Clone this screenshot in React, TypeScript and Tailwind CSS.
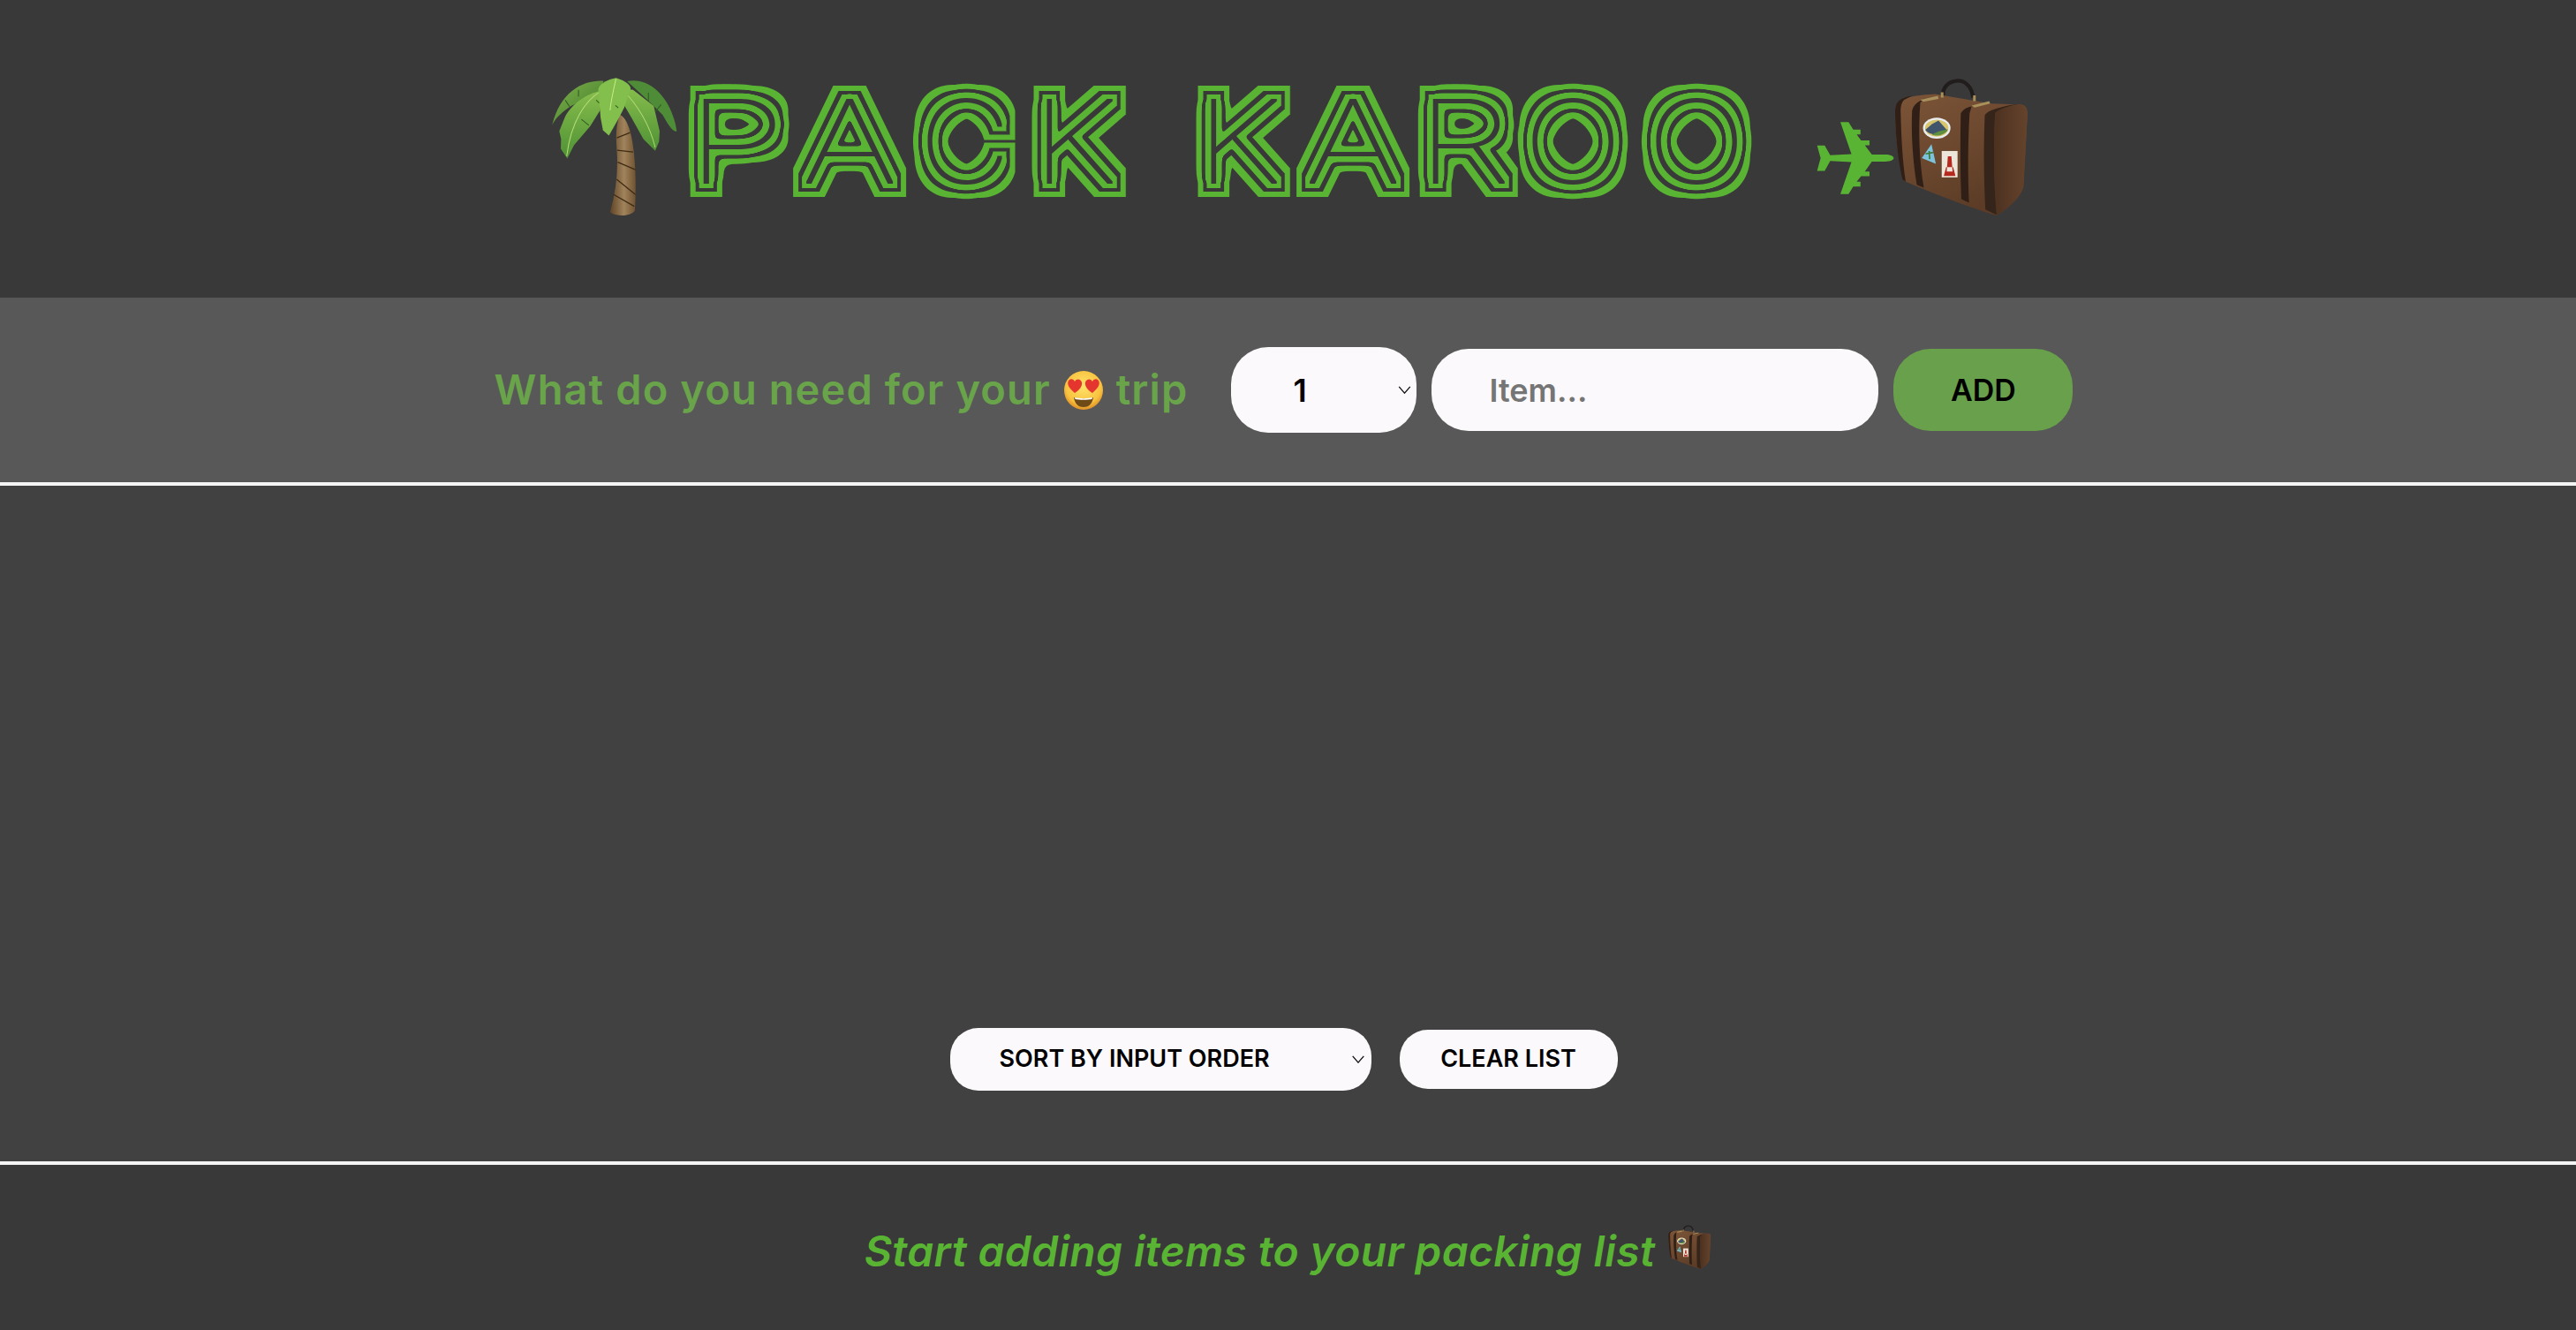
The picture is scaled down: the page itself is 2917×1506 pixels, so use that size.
const titleLetters = [
  { char: 'P', box: 'w-[124px]', stretch: 'scale-x-[1.45]' },
  { char: 'A', box: 'w-[134px]', stretch: 'scale-x-[1.3]' },
  { char: 'C', box: 'w-[127px]', stretch: 'scale-x-[1.1]' },
  { char: 'K', box: 'w-[121px]', stretch: 'scale-x-[1.25]' },
  { char: ' ', box: 'w-[68px]', stretch: '' },
  { char: 'K', box: 'w-[114px]', stretch: 'scale-x-[1.25]' },
  { char: 'A', box: 'w-[145px]', stretch: 'scale-x-[1.3]' },
  { char: 'R', box: 'w-[107px]', stretch: 'scale-x-[1.35]' },
  { char: 'O', box: 'w-[140px]', stretch: 'scale-x-[1.15]' },
  { char: 'O', box: 'w-[140px]', stretch: 'scale-x-[1.15]' },
];

function Palm({ className }: { className?: string }) {
  return (
    <svg viewBox="75 55 425 465" className={className}>
      <defs>
        <linearGradient id="trunk" x1="0" x2="1" y1="0" y2="0">
          <stop offset="0" stopColor="#5f4426" />
          <stop offset="0.55" stopColor="#a1845c" />
          <stop offset="1" stopColor="#6f5230" />
        </linearGradient>
        <linearGradient id="leafBack" x1="0" x2="1" y1="0" y2="1">
          <stop offset="0" stopColor="#7fb24a" />
          <stop offset="1" stopColor="#3f7a2c" />
        </linearGradient>
        <linearGradient id="leafFront" x1="0" x2="0" y1="0" y2="1">
          <stop offset="0" stopColor="#86bd4c" />
          <stop offset="1" stopColor="#4f9135" />
        </linearGradient>
      </defs>
      <path d="M305 180 C330 190 345 240 352 300 C360 370 360 440 356 505 C340 525 290 525 272 510 C292 440 300 370 295 300 C292 260 290 220 305 180Z" fill="url(#trunk)" />
      <path d="M295 258 L340 240 M296 300 L350 306 M298 340 L358 366 M294 398 L358 450 M284 450 L354 490" stroke="#3f2a14" strokeWidth="4" fill="none" />
      <path d="M250 65 C180 62 105 100 76 214 C88 190 110 170 140 150 L240 100Z" fill="url(#leafBack)" />
      <path d="M330 66 C400 50 480 115 498 235 C485 240 470 215 450 180 L400 130Z" fill="#4f8c38" />
      <path d="M245 98 C190 105 135 150 118 190 L100 235 L106 262 L105 295 L127 328 L150 282 L205 218 L238 165Z" fill="url(#leafFront)" />
      <path d="M240 100 C190 130 140 200 125 320" stroke="#b5dc78" strokeWidth="3" fill="none" />
      <path d="M310 90 L350 95 L420 150 L440 235 L438 270 L425 302 L385 262 L345 190 L310 130Z" fill="url(#leafFront)" />
      <path d="M310 90 C350 130 400 190 425 290" stroke="#b5dc78" strokeWidth="3" fill="none" />
      <path d="M292 55 C268 60 240 70 232 92 L240 190 L248 232 L268 250 L292 208 L302 190 L320 155 L342 90 C338 72 310 60 292 55Z" fill="#82bf4c" />
      <path d="M292 58 C285 90 275 130 272 165" stroke="#c8ea8a" strokeWidth="3" fill="none" />
      <path d="M165 95 V118 M120 130 L135 152 M402 105 V132 M445 145 L425 170 M235 140 L225 130 M290 148 L300 156 M175 195 L200 215" stroke="#2f5a22" strokeWidth="3" fill="none" />
    </svg>
  );
}

function Suitcase({ className }: { className?: string }) {
  return (
    <svg viewBox="312 50 453 470" className={className}>
      <defs>
        <linearGradient id="hide" x1="0" x2="0.5" y1="0" y2="1">
          <stop offset="0" stopColor="#7d5538" />
          <stop offset="1" stopColor="#5c3c26" />
        </linearGradient>
        <linearGradient id="hideSide" x1="0" x2="1" y1="0" y2="0">
          <stop offset="0" stopColor="#4c3120" />
          <stop offset="1" stopColor="#65432c" />
        </linearGradient>
      </defs>
      <path d="M478 112 C470 55 570 30 580 118" stroke="#211d1c" strokeWidth="13" fill="none" />
      <path d="M314 160 C315 125 350 112 450 106 L640 138 L745 142 C762 145 766 160 765 180 L752 420 C745 460 690 500 660 520 C560 490 430 440 345 402 C325 340 314 240 314 160Z" fill="url(#hide)" />
      <path d="M655 165 C690 150 720 142 745 142 C762 145 766 160 765 180 L752 420 C745 460 690 500 660 520 C650 400 650 280 655 165Z" fill="url(#hideSide)" />
      <path d="M314 160 C315 130 335 118 372 112 L345 125 C335 135 332 150 333 170 C335 260 340 340 350 404 L340 398 C325 340 314 240 314 160Z" fill="#2f1f16" />
      <path d="M372 162 C378 140 395 128 420 120 L400 134 C392 230 397 340 412 425 L388 415 C375 340 368 240 372 162Z" fill="#2f1f16" />
      <path d="M538 172 C545 160 555 152 575 148 L568 172 C562 270 562 380 566 476 L540 464 C536 370 536 270 538 172Z" fill="#2f1f16" />
      <path d="M620 178 C630 160 690 145 735 140 C690 150 665 160 655 170 C650 280 650 400 660 518 L622 500 C616 380 616 270 620 178Z" fill="#35241a" />
      <path d="M400 125 L460 112 L462 122 L410 132Z M575 145 L635 130 L638 138 L585 152Z" fill="#a8915c" />
      <path d="M470 100 h9 v18 h-9Z M580 110 h9 v20 h-9Z" fill="#a98f58" />
      <ellipse cx="456" cy="222" rx="47" ry="36" fill="#e9edf0" />
      <ellipse cx="456" cy="222" rx="40" ry="29" fill="#d9c46e" />
      <path d="M417 228 L440 208 L462 196 L492 230 C480 248 430 250 417 228Z" fill="#40556b" />
      <path d="M440 244 C460 232 480 228 494 226 C485 246 455 252 440 244Z" fill="#5e8f3e" />
      <path d="M438 277 L405 324 L453 344Z" fill="#7cc4de" />
      <path d="M430 300 L432 328 M418 310 L444 305" stroke="#3f7a34" strokeWidth="5" fill="none" />
      <rect x="473" y="300" width="54" height="90" fill="#ece6da" />
      <path d="M490 370 L494 318 L506 318 L510 370Z M480 385 L520 385 L512 355 L488 355Z" fill="#b5281e" />
    </svg>
  );
}

function Plane({ className }: { className?: string }) {
  return (
    <svg viewBox="50 200 267 252" className={className}>
      <path
        d="M132 202 H160 L176 228 H201 V245 H188 L203 265 H232 V282 H216 L240 314 H285 C305 314 315 320 315 326 C315 332 305 338 285 338 H240 L216 372 H232 V388 H203 L188 407 H201 V424 H176 L160 450 H132 L170 340 L97 336 L78 370 H52 L64 326 L52 283 H78 L97 316 L170 312Z"
        fill="#5ab433"
      />
    </svg>
  );
}

function HeartEyes({ className }: { className?: string }) {
  return (
    <svg viewBox="0 0 44 44" className={className}>
      <defs>
        <radialGradient id="face" cx="0.5" cy="0.4" r="0.6">
          <stop offset="0" stopColor="#ffe36b" />
          <stop offset="0.75" stopColor="#f8c23f" />
          <stop offset="1" stopColor="#dd8f26" />
        </radialGradient>
      </defs>
      <circle cx="22" cy="22" r="22" fill="url(#face)" />
      <path d="M11 30 C17 32 27 32 33 30 C32 38 27 41 22 41 C17 41 12 38 11 30Z" fill="#6e4a16" />
      <path d="M12 30 C17 31.5 27 31.5 32 30 L31.5 32 C27 33 17 33 12.5 32Z" fill="#fff" />
      <path d="M12 25 C5 19 3 15 5 11 C7 8 11 9 12 12 C14 8 19 9 20 13 C21 17 17 22 12 25Z" fill="#e5352f" />
      <path d="M32 25 C27 22 23 17 24 13 C25 9 30 8 32 12 C33 9 37 8 39 11 C41 15 39 19 32 25Z" fill="#e5352f" />
    </svg>
  );
}

function Chevron({ className }: { className?: string }) {
  return (
    <svg viewBox="0 0 16 10" className={className}>
      <path d="M1 1 L8 9 L15 1" stroke="#111" strokeWidth="1.5" fill="none" />
    </svg>
  );
}

export default function App() {
  return (
    <div className="flex h-[1506px] flex-col bg-[#414141] font-['Inter','Liberation_Sans',sans-serif] font-semibold">
      {/* grows the thin title letters step by step and keeps every other band, which gives the rings */}
      <svg className="absolute h-0 w-0">
        <filter id="rings" x="-5%" y="-40%" width="110%" height="180%" colorInterpolationFilters="sRGB">
          <feMorphology in="SourceAlpha" operator="dilate" radius="1" result="d0" />
          <feGaussianBlur in="d0" stdDeviation="3" />
          <feComponentTransfer result="g1">
            <feFuncA type="linear" slope="24" intercept="-3.5" />
          </feComponentTransfer>
          <feGaussianBlur in="g1" stdDeviation="3.5" />
          <feComponentTransfer result="r1">
            <feFuncA type="linear" slope="24" intercept="-3.5" />
          </feComponentTransfer>
          <feGaussianBlur in="r1" stdDeviation="4.5" />
          <feComponentTransfer result="r2">
            <feFuncA type="linear" slope="24" intercept="-3.5" />
          </feComponentTransfer>
          <feGaussianBlur in="r2" stdDeviation="6.5" />
          <feComponentTransfer result="r3">
            <feFuncA type="linear" slope="24" intercept="-3.5" />
          </feComponentTransfer>
          {/* square growth on top keeps the outer corners sharp */}
          <feMorphology in="SourceAlpha" operator="dilate" radius="6" result="s1" />
          <feMorphology in="SourceAlpha" operator="dilate" radius="10" result="s2" />
          <feMorphology in="SourceAlpha" operator="dilate" radius="16" result="s3" />
          <feComposite in="r1" in2="s1" operator="over" result="d1" />
          <feComposite in="r2" in2="s2" operator="over" result="d2" />
          <feComposite in="r3" in2="s3" operator="over" result="d3" />
          <feComposite in="d3" in2="d2" operator="out" result="outer" />
          <feComposite in="d1" in2="d0" operator="out" result="inner" />
          <feMerge result="lines">
            <feMergeNode in="outer" />
            <feMergeNode in="inner" />
          </feMerge>
          <feFlood floodColor="#5ab433" />
          <feComposite in2="lines" operator="in" />
        </filter>
      </svg>

      <header className="flex h-[337px] items-center justify-center bg-[#3a393a] pb-[6px] pl-[3px]">
        <Palm className="h-[156px] w-[142px]" />
        <h1 className="mb-[10px] ml-[5px] flex font-['Inter',sans-serif] text-[129px] leading-none font-thin whitespace-pre [filter:url(#rings)]">
          {titleLetters.map((letter, index) => (
            <span key={index} className={`flex justify-center ${letter.box}`}>
              <span className={`inline-block ${letter.stretch}`}>{letter.char}</span>
            </span>
          ))}
        </h1>
        <Plane className="mt-[26px] ml-[65px] h-[84px] w-[88px]" />
        <Suitcase className="h-[156px] w-[151px]" />
      </header>

      <form className="flex h-[213px] items-center justify-center gap-[17px] border-b-4 border-[#f5f5f5] bg-[#585858] pr-[10px]">
        <label className="mr-[32px] flex items-center gap-[15px] text-[47px] tracking-[1.1px] text-[#69a44b]">
          What do you need for your
          <HeartEyes className="h-[44px] w-[44px]" />
          trip
        </label>
        <div className="relative">
          <select className="block h-[97px] w-[210px] appearance-none rounded-[42px] bg-[#fbf9fb] pl-[70px] text-[36px] font-semibold text-black">
            <option>1</option>
          </select>
          <Chevron className="pointer-events-none absolute top-[44px] right-[5px] h-[9px] w-[17px]" />
        </div>
        <input
          placeholder="Item..."
          className="h-[93px] w-[506px] rounded-[42px] bg-[#fbf9fb] pl-[65px] text-[36px] font-semibold placeholder:text-[#757575]"
        />
        <button type="button" className="h-[93px] w-[203px] rounded-[42px] bg-[#68a04b] text-[34px] font-semibold text-black">
          ADD
        </button>
      </form>

      <main className="flex flex-1 items-end justify-center gap-[32px] pb-[80px] pr-[10px]">
        <div className="relative">
          <select className="block h-[71px] w-[477px] appearance-none rounded-[32px] bg-[#fbf9fb] pl-[56px] text-[27px] font-semibold text-black">
            <option>SORT BY INPUT ORDER</option>
          </select>
          <Chevron className="pointer-events-none absolute top-[31px] right-[7px] h-[9px] w-[16px]" />
        </div>
        <button type="button" className="mb-[2px] h-[67px] w-[247px] rounded-[32px] bg-[#fbf9fb] text-[27px] font-semibold text-black">
          CLEAR LIST
        </button>
      </main>

      <footer className="flex h-[191px] items-start justify-center gap-[14px] border-t-4 border-[#f5f5f5] bg-[#3a393a] pt-[68px]">
        <em className="text-[48px] leading-[60px] font-semibold tracking-[0.33px] text-[#5ab433]">Start adding items to your packing list</em>
        <Suitcase className="h-[50px] w-[50px]" />
      </footer>
    </div>
  );
}
